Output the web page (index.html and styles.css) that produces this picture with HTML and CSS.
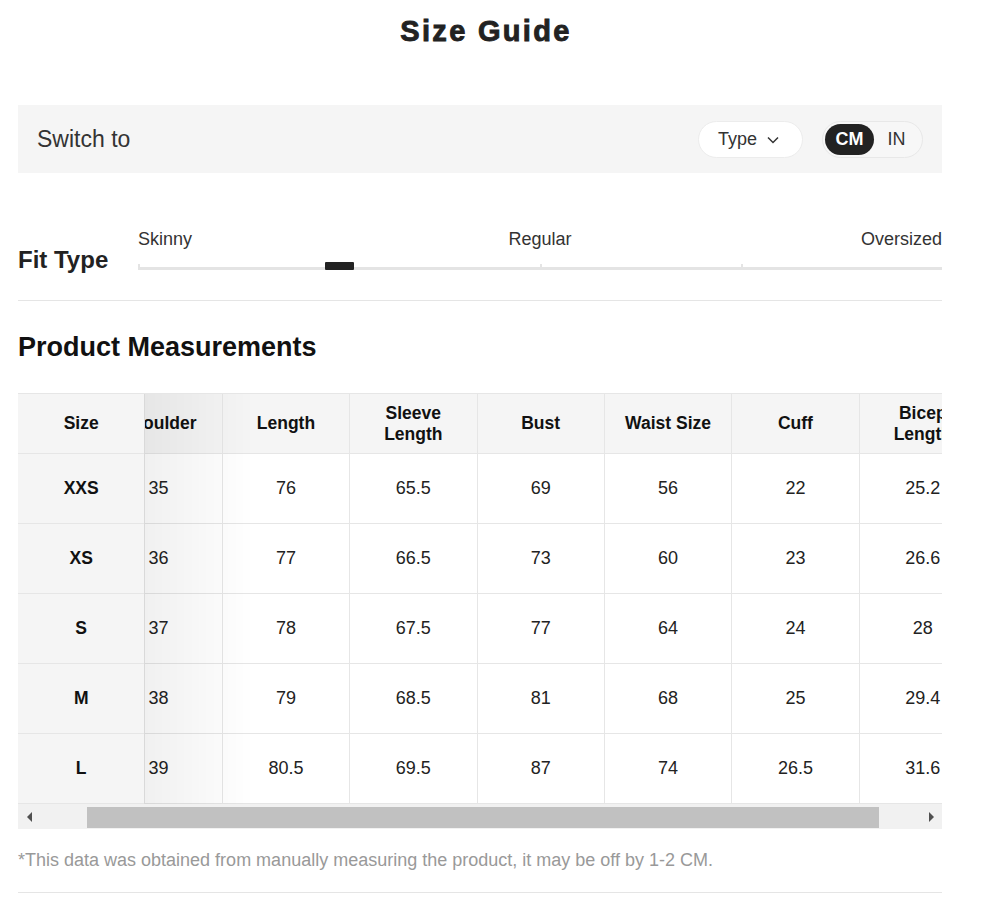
FILE: index.html
```html
<!DOCTYPE html>
<html lang="en">
<head>
<meta charset="utf-8">
<title>Size Guide</title>
<link rel="stylesheet" href="styles.css">
</head>
<body>
<div class="page">
  <h1 class="title">Size Guide</h1>

  <div class="switch-bar">
    <span class="switch-label">Switch to</span>
    <div class="controls">
      <button class="type-btn">Type
        <svg class="chev" width="12" height="8" viewBox="0 0 12 8"><path d="M1 1.5l5 5 5-5" fill="none" stroke="#333" stroke-width="1.5"/></svg>
      </button>
      <div class="unit-toggle">
        <span class="unit active">CM</span>
        <span class="unit">IN</span>
      </div>
    </div>
  </div>

  <div class="fit">
    <div class="fit-label">Fit Type</div>
    <div class="slider">
      <div class="fit-labels">
        <span class="l-start">Skinny</span>
        <span class="l-mid">Regular</span>
        <span class="l-end">Oversized</span>
      </div>
      <div class="track">
        <div class="seg"></div><div class="seg"></div><div class="seg"></div><div class="seg"></div>
        <div class="thumb"></div>
      </div>
    </div>
  </div>

  <h2 class="section-title">Product Measurements</h2>

  <div class="table-scroll">
    <table class="size-table">
      <thead>
        <tr>
          <th class="sticky">Size</th>
          <th>Shoulder</th>
          <th>Length</th>
          <th>Sleeve<br>Length</th>
          <th>Bust</th>
          <th>Waist Size</th>
          <th>Cuff</th>
          <th>Bicep<br>Length</th>
        </tr>
      </thead>
      <tbody>
        <tr><td class="sticky">XXS</td><td>35</td><td>76</td><td>65.5</td><td>69</td><td>56</td><td>22</td><td>25.2</td></tr>
        <tr><td class="sticky">XS</td><td>36</td><td>77</td><td>66.5</td><td>73</td><td>60</td><td>23</td><td>26.6</td></tr>
        <tr><td class="sticky">S</td><td>37</td><td>78</td><td>67.5</td><td>77</td><td>64</td><td>24</td><td>28</td></tr>
        <tr><td class="sticky">M</td><td>38</td><td>79</td><td>68.5</td><td>81</td><td>68</td><td>25</td><td>29.4</td></tr>
        <tr><td class="sticky">L</td><td>39</td><td>80.5</td><td>69.5</td><td>87</td><td>74</td><td>26.5</td><td>31.6</td></tr>
      </tbody>
    </table>
  </div>
  <div class="hscroll">
    <span class="sb-btn"><span class="arrow-left"></span></span>
    <div class="sb-track"><div class="sb-thumb"></div></div>
    <span class="sb-btn"><span class="arrow-right"></span></span>
  </div>

  <p class="note">*This data was obtained from manually measuring the product, it may be off by 1-2 CM.</p>
</div>
<script src="script.js"></script>
</body>
</html>
```

FILE: styles.css
```css
* { box-sizing: border-box; }
body {
  margin: 0;
  background: #fff;
  color: #222;
  font-family: "Liberation Sans", Arial, sans-serif;
}
.page {
  width: 924px;
  margin-left: 18px;
}
.title {
  margin: 0;
  height: 62px;
  line-height: 62px;
  text-align: center;
  padding-left: 12px;
  font-size: 29px;
  font-weight: bold;
  letter-spacing: 2.3px;
  color: #222;
  -webkit-text-stroke: 0.9px #222;
}
.switch-bar {
  margin-top: 43px;
  height: 68px;
  background: #f5f5f5;
  display: flex;
  align-items: center;
  justify-content: space-between;
  padding: 0 19px 0 19px;
}
.switch-label {
  font-size: 23px;
  color: #333;
}
.controls {
  display: flex;
  align-items: center;
  gap: 19px;
}
.type-btn {
  height: 37px;
  width: 105px;
  border: 1px solid #ececec;
  border-radius: 19px;
  background: #fff;
  font-family: inherit;
  font-size: 18px;
  color: #333;
  display: flex;
  align-items: center;
  padding: 0 0 0 19px;
  gap: 10px;
}
.chev { display: block; margin-top: 1px; }
.unit-toggle {
  height: 37px;
  width: 101px;
  border: 1px solid #e8e8e8;
  border-radius: 19px;
  background: #f7f7f7;
  display: flex;
  align-items: center;
  padding: 0 2px;
}
.unit {
  font-size: 18px;
  color: #333;
  height: 31px;
  line-height: 31px;
  width: 45px;
  text-align: center;
}
.unit.active {
  width: 49px;
  background: #222;
  color: #fff;
  font-weight: bold;
  border-radius: 16px;
}
.fit {
  display: flex;
  align-items: flex-end;
  padding-top: 55px;
  padding-bottom: 30px;
  border-bottom: 1px solid #e5e5e5;
}
.fit-label {
  width: 120px;
  flex: none;
  font-size: 24px;
  font-weight: bold;
  line-height: 28px;
  margin-bottom: -4px;
  color: #222;
}
.slider {
  flex: 1;
}
.fit-labels {
  display: grid;
  grid-template-columns: 1fr auto 1fr;
  font-size: 18px;
  line-height: 22px;
  color: #333;
}
.l-start { justify-self: start; }
.l-end { justify-self: end; }
.track {
  position: relative;
  margin-top: 12px;
  height: 8px;
  display: flex;
  align-items: flex-end;
}
.seg {
  flex: 1;
  height: 6px;
  border-bottom: 3px solid #e4e4e4;
  border-left: 2px solid #e4e4e4;
}
.seg:last-of-type { border-right: 2px solid #e4e4e4; }
.thumb {
  position: absolute;
  left: 187px;
  bottom: 0;
  width: 29px;
  height: 8px;
  background: #222;
  border-radius: 1px;
}
.section-title {
  margin: 0;
  padding-top: 31px;
  line-height: 30px;
  font-size: 27px;
  font-weight: bold;
  color: #111;
  margin-bottom: 31px;
}
.table-scroll {
  overflow: hidden;
}
.size-table {
  width: 1020px;
  table-layout: fixed;
  border-collapse: separate;
  border-spacing: 0;
  border-top: 1px solid #e6e6e6;
  border-left: 1px solid #e6e6e6;
}
.size-table th,
.size-table td {
  border-right: 1px solid #e6e6e6;
  border-bottom: 1px solid #e6e6e6;
  text-align: center;
  vertical-align: middle;
  padding: 0 4px;
  white-space: nowrap;
}
.size-table th {
  height: 60px;
  background: #f5f5f5;
  font-size: 17.5px;
  font-weight: bold;
  line-height: 21px;
  color: #111;
}
.size-table td {
  height: 70px;
  font-size: 18px;
  color: #222;
  background: #fff;
}
.size-table .sticky {
  position: sticky;
  left: 0;
  z-index: 1;
  background: #f5f5f5;
}
.size-table td.sticky {
  font-weight: bold;
  font-size: 17.5px;
  color: #111;
}
.size-table .sticky::after {
  content: "";
  position: absolute;
  top: 0;
  bottom: -1px;
  left: 100%;
  width: 110px;
  background: linear-gradient(to right, rgba(0,0,0,0.06), rgba(0,0,0,0));
  pointer-events: none;
}
.hscroll {
  display: flex;
  height: 25px;
  background: #f1f1f1;
}
.sb-btn {
  width: 25px;
  flex: none;
  display: flex;
  align-items: center;
  justify-content: center;
}
.arrow-left,
.arrow-right {
  width: 0;
  height: 0;
  border-top: 5px solid transparent;
  border-bottom: 5px solid transparent;
}
.arrow-left { border-right: 5px solid #505050; margin-right: 3px; }
.arrow-right { border-left: 5px solid #505050; margin-left: 3px; }
.sb-track {
  flex: 1;
  padding: 3px 0 1px;
}
.sb-thumb {
  margin-left: 44px;
  width: 792px;
  height: 100%;
  background: #c1c1c1;
}
.note {
  margin: 20px 0 0;
  line-height: 22px;
  padding-bottom: 21px;
  font-size: 18px;
  color: #999;
  border-bottom: 1px solid #e5e5e5;
}
```

FILE: script.js
```js
document.querySelector('.table-scroll').scrollLeft = 51;
```
